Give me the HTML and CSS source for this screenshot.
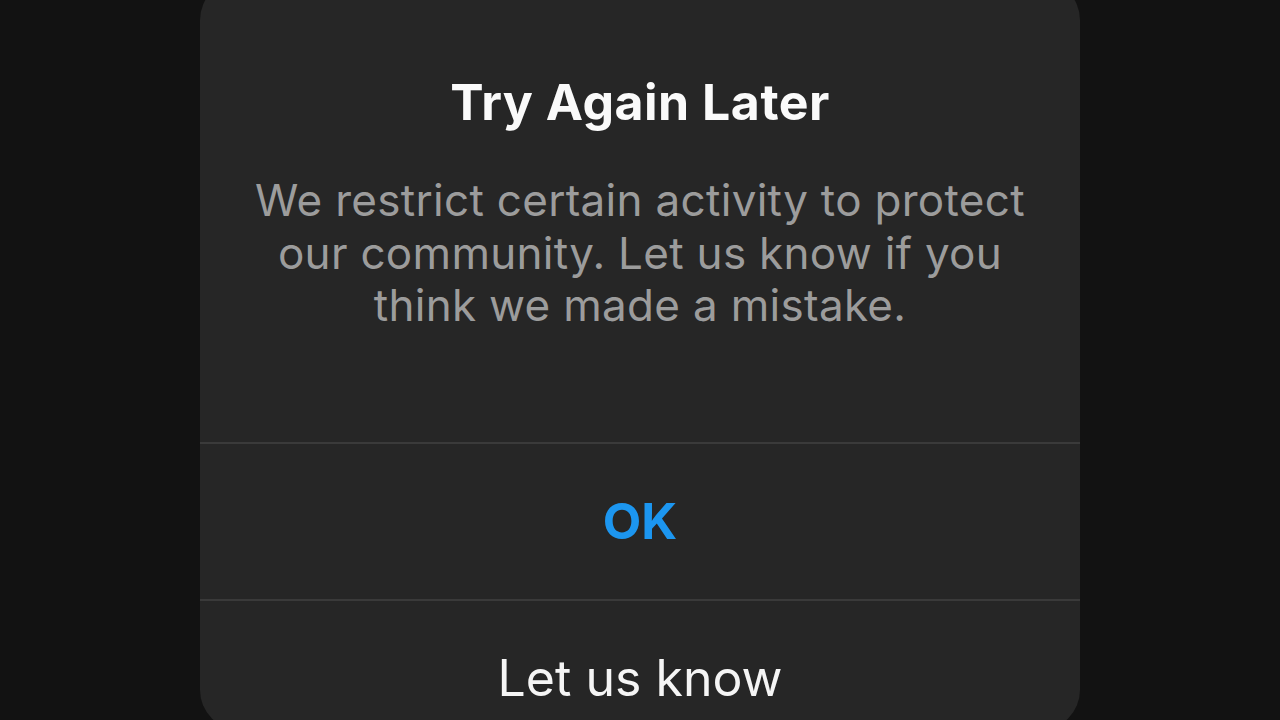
FILE: index.html
```html
<!DOCTYPE html>
<html lang="en">
<head>
  <meta charset="UTF-8" />
  <title>Try Again Later</title>
  <link rel="stylesheet" href="styles.css">
</head>
<body>

<div class="dialog">
  <div class="dialog-body">
    <h2>Try Again Later</h2>
    <p>We restrict certain activity to protect our community. Let us know if you think we made a mistake.</p>
  </div>
  <button class="action primary">OK</button>
  <button class="action">Let us know</button>
</div>

</body>
</html>
```

FILE: styles.css
```css
* {
  margin: 0;
  padding: 0;
  box-sizing: border-box;
}

body {
  font-family: 'Inter', 'Noto Sans', sans-serif;
  background-color: #121212;
  height: 720px;
  overflow: hidden;
}

.dialog {
  width: 880px;
  height: 750px;
  margin: -20px auto 0;
  background-color: #262626;
  border-radius: 40px;
  overflow: hidden;
}

.dialog-body {
  padding: 92px 50px 110px;
  text-align: center;
}

.dialog-body h2 {
  font-size: 50px;
  font-weight: 700;
  line-height: 60px;
  letter-spacing: 0.5px;
  color: #fafafa;
  margin-bottom: 42px;
}

.dialog-body p {
  font-size: 44px;
  line-height: 52.5px;
  letter-spacing: 0.3px;
  color: #9c9c9c;
}

.action {
  display: block;
  width: 100%;
  height: 157px;
  background: none;
  border: none;
  border-top: 2px solid #3a3a3a;
  font-family: inherit;
  font-size: 50px;
  color: #f5f5f5;
  cursor: pointer;
}

.action.primary {
  color: #1c96f0;
  font-weight: 700;
}
```
